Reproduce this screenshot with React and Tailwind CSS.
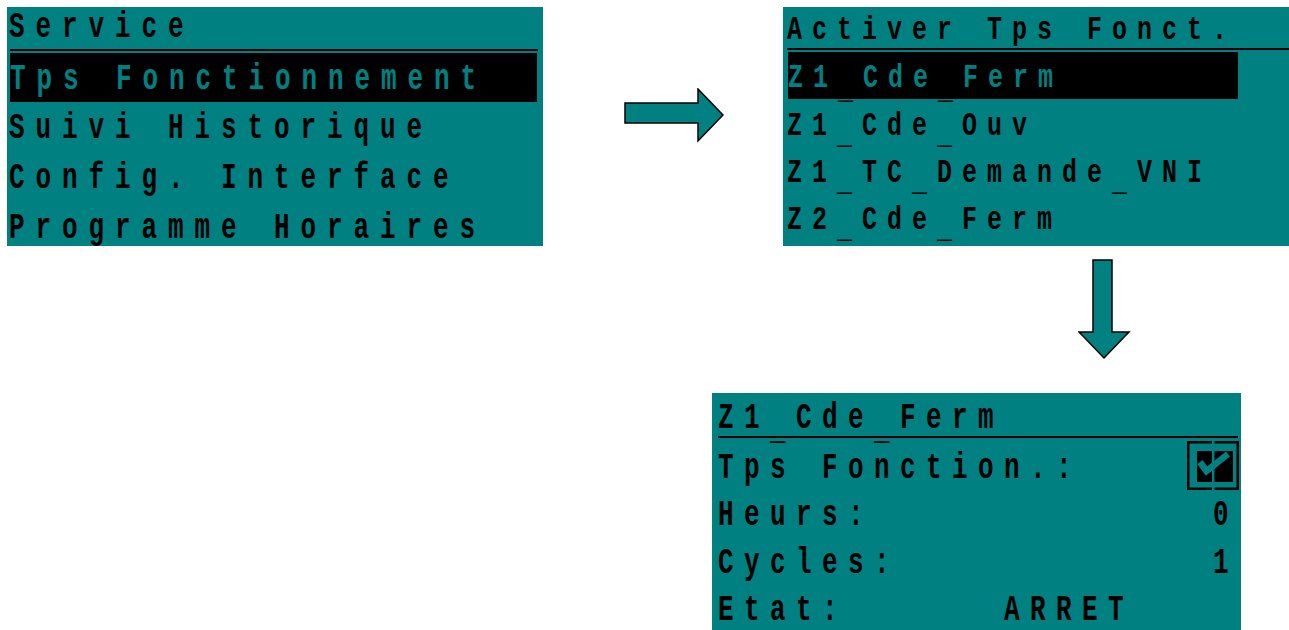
import React from "react";

const F = "font-[family-name:'Liberation_Mono','Courier_New',monospace] font-bold";
const T1 = `${F} inline-block whitespace-pre text-[26px] leading-none tracking-[10.9px] origin-bottom scale-y-[1.45]`;
const T2 = `${F} inline-block whitespace-pre text-[25px] leading-none tracking-[10px] origin-bottom scale-y-[1.3]`;
const T3 = `${F} inline-block whitespace-pre text-[26px] leading-none tracking-[10.4px] origin-bottom scale-y-[1.4]`;

function Und({ s, u }) {
  const parts = s.split("_");
  return (
    <>
      {parts.map((p, i) => (
        <React.Fragment key={i}>
          {i > 0 && <span className={u}>_</span>}
          {p}
        </React.Fragment>
      ))}
    </>
  );
}

function RightArrow() {
  return (
    <svg width="101" height="55" viewBox="0 0 101 55" className="block">
      <polygon
        points="1,15 74,15 74,1 99,27 74,53 74,35 1,35"
        fill="#008080"
        stroke="#000"
        strokeWidth="1.5"
        strokeLinejoin="miter"
      />
    </svg>
  );
}

function DownArrow() {
  return (
    <svg width="53" height="101" viewBox="0 0 53 101" className="block">
      <polygon
        points="15,1 34,1 34,73 51,73 26,99 1,73 15,73"
        fill="#008080"
        stroke="#000"
        strokeWidth="1.5"
      />
    </svg>
  );
}

function CheckBox() {
  return (
    <svg width="52" height="49" viewBox="0 0 52 49" className="block">
      <rect x="1.25" y="1.25" width="49.5" height="46.5" fill="none" stroke="#000" strokeWidth="2.5" />
      <rect x="10" y="10" width="36" height="31" fill="#000" />
      <polyline points="13,21 19.5,30 41,13" fill="none" stroke="#008080" strokeWidth="6.5" strokeLinejoin="miter" strokeLinecap="butt" />
      <rect x="25" y="0" width="2.5" height="49" fill="#008080" />
    </svg>
  );
}

const U2 = "relative top-[6px]";
const U2sel = "relative top-[8px] text-black";
const U3 = "relative top-[8px]";

export default function App() {
  return (
    <div className="w-[1289px] h-[630px] bg-white overflow-hidden">
      <div className="flex items-start pt-[7px]">
        {/* Panel 1 */}
        <div className="ml-[7px] w-[536px] h-[239px] bg-[#008080] overflow-hidden flex flex-col text-black">
          <div className="h-[42px] flex items-end pb-[3px] pl-[2px] shrink-0">
            <span className={T1}>Service</span>
          </div>
          <div className="h-[2px] bg-black ml-[3px] mr-[5px] shrink-0" />
          <div className="h-[2px] shrink-0" />
          <div className="h-[49px] bg-black ml-[3px] mr-[6px] flex items-end pb-[4px] shrink-0 text-[#008080]">
            <span className={T1}>Tps Fonctionnement</span>
          </div>
          {["Suivi Historique", "Config. Interface", "Programme Horaires"].map((t) => (
            <div key={t} className="h-[50px] flex items-end pb-[5px] pl-[2px] shrink-0">
              <span className={T1}>{t}</span>
            </div>
          ))}
        </div>

        <div className="ml-[81px] mt-[81px] shrink-0">
          <RightArrow />
        </div>

        {/* Panel 2 */}
        <div className="ml-[58px] w-[506px] h-[239px] bg-[#008080] overflow-hidden flex flex-col text-black shrink-0">
          <div className="h-[41px] flex items-end pb-[1px] pl-[4px] shrink-0">
            <span className={T2}>Activer Tps Fonct.</span>
          </div>
          <div className="h-[2px] bg-black ml-[4px] shrink-0" />
          <div className="h-[2px] shrink-0" />
          <div className="h-[47px] bg-black ml-[5px] w-[450px] flex items-end pb-[4px] shrink-0 text-[#008080]">
            <span className={T2}>
              <Und s="Z1_Cde_Ferm" u={U2sel} />
            </span>
          </div>
          {["Z1_Cde_Ouv", "Z1_TC_Demande_VNI", "Z2_Cde_Ferm"].map((t) => (
            <div key={t} className="h-[47px] flex items-end pb-[3px] pl-[4px] shrink-0">
              <span className={T2}>
                <Und s={t} u={U2} />
              </span>
            </div>
          ))}
        </div>
      </div>

      <div className="mt-[13px] ml-[1078px] w-[53px]">
        <DownArrow />
      </div>

      {/* Panel 3 */}
      <div className="mt-[33px] ml-[712px] w-[529px] h-[237px] bg-[#008080] overflow-hidden flex flex-col text-black">
        <div className="h-[43px] flex items-end pl-[6px] shrink-0">
          <span className={T3}>
            <Und s="Z1_Cde_Ferm" u={U3} />
          </span>
        </div>
        <div className="h-[2px] bg-black ml-[6px] mr-[3px] shrink-0" />
        <div className="h-[48px] flex items-end justify-between pl-[6px] pr-[2px] shrink-0">
          <span className={T3}>Tps Fonction.:</span>
          <div className="mb-[-4px]">
            <CheckBox />
          </div>
        </div>
        <div className="h-[48px] flex items-end justify-between pl-[6px] pr-[2px] pb-[1px] shrink-0">
          <span className={T3}>Heurs:</span>
          <span className={T3}>0</span>
        </div>
        <div className="h-[48px] flex items-end justify-between pl-[6px] pr-[2px] pb-[1px] shrink-0">
          <span className={T3}>Cycles:</span>
          <span className={T3}>1</span>
        </div>
        <div className="h-[48px] flex items-end pl-[6px] pb-[2px] shrink-0">
          <span className={T3}>{"Etat:      ARRET"}</span>
        </div>
      </div>
    </div>
  );
}
